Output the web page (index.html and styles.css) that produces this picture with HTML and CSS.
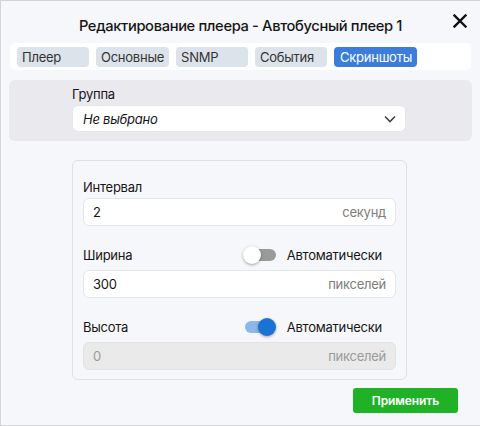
FILE: index.html
```html
<!DOCTYPE html>
<html lang="ru">
<head>
<meta charset="utf-8">
<link rel="stylesheet" href="styles.css">
</head>
<body>
<div class="dialog">
  <div class="header">
    <div class="title">Редактирование плеера - Автобусный плеер 1</div>
    <button class="close" aria-label="Закрыть">
      <svg width="14" height="14" viewBox="0 0 14 14"><path d="M1.5 1.5 L12.5 12.5 M12.5 1.5 L1.5 12.5" stroke="#111" stroke-width="2.4" stroke-linecap="square" fill="none"/></svg>
    </button>
  </div>
  <div class="tabs">
    <div class="tab">Плеер</div>
    <div class="tab">Основные</div>
    <div class="tab">SNMP</div>
    <div class="tab">События</div>
    <div class="tab active">Скриншоты</div>
  </div>
  <div class="group">
    <div class="group-inner">
      <div class="group-label">Группа</div>
      <div class="select">
        <span class="select-text">Не выбрано</span>
        <svg width="12" height="8" viewBox="0 0 12 8"><path d="M1 1.5 L6 6.5 L11 1.5" stroke="#444" stroke-width="1.6" fill="none"/></svg>
      </div>
    </div>
  </div>
  <div class="card">
    <div class="label-row">Интервал</div>
    <div class="input"><span class="val">2</span><span class="suffix">секунд</span></div>

    <div class="label-row toggle-row">
      <span>Ширина</span>
      <div class="auto">
        <span class="switch"><span class="track"></span><span class="knob"></span></span>
        <span>Автоматически</span>
      </div>
    </div>
    <div class="input"><span class="val">300</span><span class="suffix">пикселей</span></div>

    <div class="label-row toggle-row">
      <span>Высота</span>
      <div class="auto">
        <span class="switch on"><span class="track"></span><span class="knob"></span></span>
        <span>Автоматически</span>
      </div>
    </div>
    <div class="input disabled"><span class="val">0</span><span class="suffix">пикселей</span></div>
  </div>
  <div class="footer">
    <button class="apply">Применить</button>
  </div>
</div>
</body>
</html>
```

FILE: styles.css
```css
* { box-sizing: border-box; }
html, body { margin: 0; padding: 0; }
body {
  font-family: Inter, "Noto Sans", sans-serif;
  color: #161616;
  background: #f6f7fb;
  letter-spacing: -0.25px;
}
.dialog {
  width: 480px;
  height: 426px;
  background: #f6f7fb;
  border-top: 1px solid #d4d4d8;
  border-left: 1px solid #d4d4d8;
  border-bottom: 1px solid #d4d4d8;
  position: relative;
}
.header {
  height: 42px;
  display: flex;
  align-items: center;
  justify-content: center;
  padding-top: 7px;
}
.title {
  font-size: 14.7px;
  font-weight: 500;
  letter-spacing: -0.35px;
}
.close {
  position: absolute;
  top: 12px;
  right: 12px;
  width: 16px;
  height: 16px;
  border: 0;
  background: none;
  padding: 0;
  display: flex;
  align-items: center;
  justify-content: center;
}
.tabs {
  margin: 0 9px 0 9px;
  height: 27px;
  background: #fff;
  border-radius: 5px;
  display: flex;
  align-items: center;
  gap: 7px;
  padding: 0 7px;
}
.tab {
  height: 20px;
  min-width: 72px;
  padding: 0 5px;
  background: #dde3ea;
  border-radius: 4px;
  font-size: 13px;
  line-height: 20px;
  color: #333;
}
.tab.active {
  background: #3b7dd8;
  color: #fff;
  padding: 0 5px 0 6px;
}
.group {
  margin: 10px 8px 0 8px;
  height: 61px;
  background: #e9e9ee;
  border-radius: 6px;
  padding: 6px 0 0 63px;
}
.group-inner { width: 334px; }
.group-label {
  height: 19px;
  font-size: 13px;
  line-height: 17px;
}
.select {
  height: 27px;
  background: #fff;
  border: 1px solid #e4e6ea;
  border-radius: 6px;
  display: flex;
  align-items: center;
  justify-content: space-between;
  padding: 0 9px 0 10px;
}
.select-text {
  font-size: 13px;
  font-style: italic;
}
.card {
  margin: 19px 0 0 71px;
  width: 335px;
  border: 1px solid #dde0e5;
  border-radius: 6px;
  padding: 15px 10px 9px 10px;
}
.label-row {
  height: 22px;
  font-size: 13px;
  display: flex;
  align-items: center;
}
.toggle-row {
  height: 32px;
  margin-top: 12px;
  justify-content: space-between;
  padding-right: 14px;
  padding-top: 1px;
}
.auto {
  display: flex;
  align-items: center;
  gap: 11px;
}
.switch {
  position: relative;
  width: 33px;
  height: 18px;
  display: inline-block;
}
.track {
  position: absolute;
  left: 4px;
  top: 3px;
  width: 29px;
  height: 12px;
  border-radius: 6px;
  background: #9a9a9a;
}
.knob {
  position: absolute;
  left: 0;
  top: 0;
  width: 18px;
  height: 18px;
  border-radius: 50%;
  background: #fff;
  box-shadow: 0 1px 3px rgba(0,0,0,0.35);
}
.switch.on .track { background: #8db6ea; left: 2px; }
.switch.on .knob { left: 15px; background: #1a73d4; }
.input {
  height: 28px;
  background: #fff;
  border: 1px solid #e3e6ea;
  border-radius: 6px;
  display: flex;
  align-items: center;
  justify-content: space-between;
  padding: 0 9px 0 9px;
  font-size: 13px;
}
.input .suffix { color: #7d7d7d; }
.input.disabled {
  background: #eaeaea;
  border-color: #e2e2e2;
}
.input.disabled .val { color: #9a9a9a; }
.input.disabled .suffix { color: #9a9a9a; }
.footer {
  display: flex;
  justify-content: flex-end;
  padding: 8px 22px 0 0;
}
.apply {
  width: 105px;
  height: 25px;
  border: 0;
  border-radius: 3px;
  background: #1fb226;
  color: #fff;
  font-family: Inter, "Noto Sans", sans-serif;
  font-size: 12px;
  font-weight: 600;
  letter-spacing: -0.1px;
}
```
